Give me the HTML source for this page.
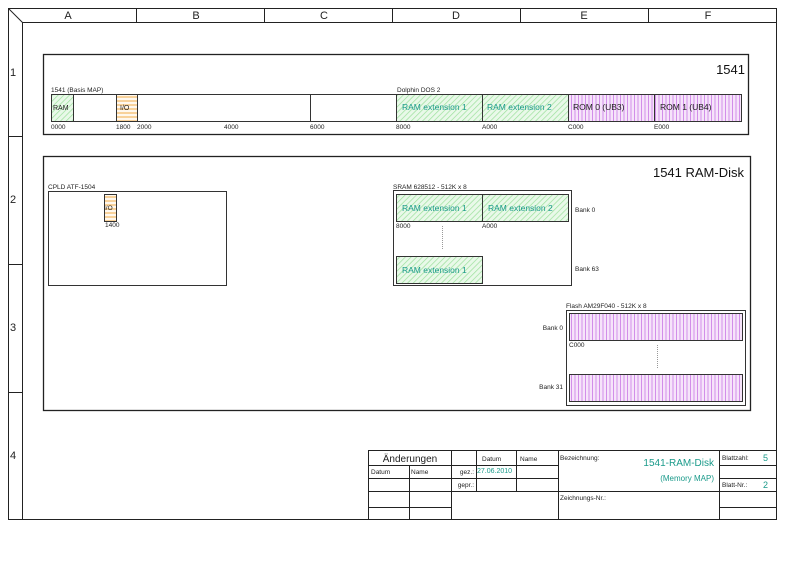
<!DOCTYPE html>
<html><head><meta charset="utf-8"><style>
html,body{margin:0;padding:0;background:#fff;width:800px;height:566px;overflow:hidden}
svg{display:block;font-family:"Liberation Sans",sans-serif}
</style></head><body>
<svg width="800" height="566" viewBox="0 0 800 566" xmlns="http://www.w3.org/2000/svg">
<defs>
<pattern id="g" width="4" height="4" patternUnits="userSpaceOnUse" patternTransform="rotate(45)">
<rect width="4" height="4" fill="#e9f9e9"/><line x1="0" y1="0" x2="0" y2="4" stroke="#9be09b" stroke-width="1.4"/></pattern>
<pattern id="o" width="4" height="4" patternUnits="userSpaceOnUse">
<rect width="4" height="4" fill="#fff8ee"/><line x1="0" y1="1" x2="4" y2="1" stroke="#f5bd6e" stroke-width="1.3"/></pattern>
<pattern id="p" width="3.5" height="4" patternUnits="userSpaceOnUse">
<rect width="3.5" height="4" fill="#f6e4fa"/><line x1="1" y1="0" x2="1" y2="4" stroke="#cf85e8" stroke-width="0.9"/></pattern>
</defs>
<g stroke="#222" fill="none" stroke-width="1">
<rect x="8.5" y="8.5" width="768" height="511"/>
<line x1="22.5" y1="22.5" x2="776" y2="22.5"/>
<line x1="22.5" y1="22.5" x2="22.5" y2="519"/>
<line x1="8.5" y1="8.5" x2="22.5" y2="22.5"/>
<line x1="136.5" y1="8" x2="136.5" y2="22"/><line x1="264.5" y1="8" x2="264.5" y2="22"/>
<line x1="392.5" y1="8" x2="392.5" y2="22"/><line x1="520.5" y1="8" x2="520.5" y2="22"/>
<line x1="648.5" y1="8" x2="648.5" y2="22"/>
<line x1="8" y1="136.5" x2="22" y2="136.5"/><line x1="8" y1="264.5" x2="22" y2="264.5"/><line x1="8" y1="392.5" x2="22" y2="392.5"/>
</g>
<g font-size="11" fill="#222" text-anchor="middle">
<text x="68" y="19">A</text><text x="196" y="19">B</text><text x="324" y="19">C</text><text x="456" y="19">D</text><text x="584" y="19">E</text><text x="708" y="19">F</text>
<text x="13" y="76">1</text><text x="13" y="203">2</text><text x="13" y="331">3</text><text x="13" y="459">4</text>
</g>
<rect x="43.5" y="54.5" width="705" height="80" fill="none" stroke="#222" stroke-width="1.3"/>
<text x="745" y="74" font-size="13" text-anchor="end" fill="#111">1541</text>
<text x="51" y="92" font-size="6.5" fill="#222">1541  (Basis MAP)</text>
<text x="397" y="92" font-size="6.5" fill="#222">Dolphin DOS 2</text>
<rect x="51.5" y="94.5" width="22" height="27" fill="url(#g)"/>
<rect x="116.5" y="94.5" width="21" height="27" fill="url(#o)"/>
<rect x="396.5" y="94.5" width="172" height="27" fill="url(#g)"/>
<rect x="568.5" y="94.5" width="173" height="27" fill="url(#p)"/>
<g stroke="#333" fill="none">
<rect x="51.5" y="94.5" width="690" height="27"/>
<line x1="73.5" y1="94" x2="73.5" y2="121"/><line x1="116.5" y1="94" x2="116.5" y2="121"/><line x1="137.5" y1="94" x2="137.5" y2="121"/>
<line x1="310.5" y1="94" x2="310.5" y2="121"/><line x1="396.5" y1="94" x2="396.5" y2="121"/><line x1="482.5" y1="94" x2="482.5" y2="121"/>
<line x1="568.5" y1="94" x2="568.5" y2="121"/><line x1="654.5" y1="94" x2="654.5" y2="121"/>
</g>
<g font-size="7" fill="#222"><text x="53" y="110">RAM</text><text x="120" y="110">I/O</text></g>
<g font-size="8.5" fill="#1a9a8a"><text x="402" y="110">RAM extension 1</text><text x="487" y="110">RAM extension 2</text></g>
<g font-size="8.5" fill="#222"><text x="573" y="110">ROM 0 (UB3)</text><text x="660" y="110">ROM 1 (UB4)</text></g>
<g font-size="6.5" fill="#222"><text x="51" y="129">0000</text><text x="116" y="129">1800</text><text x="137" y="129">2000</text><text x="224" y="129">4000</text><text x="310" y="129">6000</text><text x="396" y="129">8000</text><text x="482" y="129">A000</text><text x="568" y="129">C000</text><text x="654" y="129">E000</text></g>
<rect x="43.5" y="156.5" width="707" height="254" fill="none" stroke="#222" stroke-width="1.3"/>
<text x="744" y="177" font-size="13" text-anchor="end" fill="#111">1541 RAM-Disk</text>
<text x="48" y="189" font-size="6.5" fill="#222">CPLD ATF-1504</text>
<rect x="48.5" y="191.5" width="178" height="94" fill="none" stroke="#333"/>
<rect x="104.5" y="194.5" width="12" height="27" fill="url(#o)" stroke="#333"/>
<text x="104" y="210" font-size="6.5" fill="#222">I/O</text>
<text x="105" y="227" font-size="6.5" fill="#222">1400</text>
<text x="393" y="189" font-size="6.5" fill="#222">SRAM 628512 - 512K x 8</text>
<rect x="393.5" y="190.5" width="178" height="95" fill="none" stroke="#333"/>
<rect x="396.5" y="194.5" width="172" height="27" fill="url(#g)" stroke="#333"/>
<line x1="482.5" y1="194" x2="482.5" y2="221" stroke="#333"/>
<rect x="396.5" y="256.5" width="86" height="27" fill="url(#g)" stroke="#333"/>
<g font-size="8.5" fill="#1a9a8a"><text x="402" y="211">RAM extension 1</text><text x="488" y="211">RAM extension 2</text><text x="402" y="273">RAM extension 1</text></g>
<g font-size="6.5" fill="#222"><text x="396" y="228">8000</text><text x="482" y="228">A000</text><text x="575" y="212">Bank 0</text><text x="575" y="271">Bank 63</text></g>
<line x1="442.5" y1="226" x2="442.5" y2="250" stroke="#999" stroke-dasharray="1,1"/>
<text x="566" y="308" font-size="6.5" fill="#222">Flash AM29F040 - 512K x 8</text>
<rect x="566.5" y="310.5" width="179" height="95" fill="none" stroke="#333"/>
<rect x="569.5" y="313.5" width="173" height="27" fill="url(#p)" stroke="#333"/>
<rect x="569.5" y="374.5" width="173" height="27" fill="url(#p)" stroke="#333"/>
<g font-size="6.5" fill="#222"><text x="563" y="330" text-anchor="end">Bank 0</text><text x="563" y="389" text-anchor="end">Bank 31</text><text x="569" y="347">C000</text></g>
<line x1="657.5" y1="345" x2="657.5" y2="369" stroke="#999" stroke-dasharray="1,1"/>
<g stroke="#222" fill="none">
<rect x="368.5" y="450.5" width="408" height="69"/>
<line x1="368" y1="465.5" x2="558" y2="465.5"/>
<line x1="368" y1="478.5" x2="451" y2="478.5"/>
<line x1="368" y1="491.5" x2="558" y2="491.5"/>
<line x1="368" y1="507.5" x2="451" y2="507.5"/>
<line x1="451" y1="478.5" x2="558" y2="478.5"/>
<line x1="409.5" y1="465" x2="409.5" y2="519"/>
<line x1="451.5" y1="450" x2="451.5" y2="519"/>
<line x1="476.5" y1="450" x2="476.5" y2="491"/>
<line x1="516.5" y1="450" x2="516.5" y2="491"/>
<line x1="558.5" y1="450" x2="558.5" y2="519"/>
<line x1="558" y1="491.5" x2="719" y2="491.5"/>
<line x1="719.5" y1="450" x2="719.5" y2="519"/>
<line x1="719" y1="465.5" x2="776" y2="465.5"/>
<line x1="719" y1="478.5" x2="776" y2="478.5"/>
<line x1="719" y1="491.5" x2="776" y2="491.5"/>
<line x1="719" y1="507.5" x2="776" y2="507.5"/>
</g>
<g font-size="6.5" fill="#222">
<text x="410" y="462" font-size="10" text-anchor="middle">Änderungen</text>
<text x="482" y="461">Datum</text><text x="520" y="461">Name</text>
<text x="371" y="474">Datum</text><text x="411" y="474">Name</text>
<text x="474" y="474" text-anchor="end">gez.:</text><text x="474" y="487" text-anchor="end">gepr.:</text>
<text x="560" y="460">Bezeichnung:</text>
<text x="560" y="500">Zeichnungs-Nr.:</text>
<text x="722" y="460">Blattzahl:</text><text x="722" y="487">Blatt-Nr.:</text>
</g>
<g fill="#1a9a8a">
<text x="477" y="473" font-size="7">27.06.2010</text>
<text x="714" y="466" font-size="10" text-anchor="end">1541-RAM-Disk</text>
<text x="714" y="481" font-size="8" text-anchor="end">(Memory MAP)</text>
<text x="768" y="461" font-size="9" text-anchor="end">5</text>
<text x="768" y="488" font-size="9" text-anchor="end">2</text>
</g>
</svg>
</body></html>
